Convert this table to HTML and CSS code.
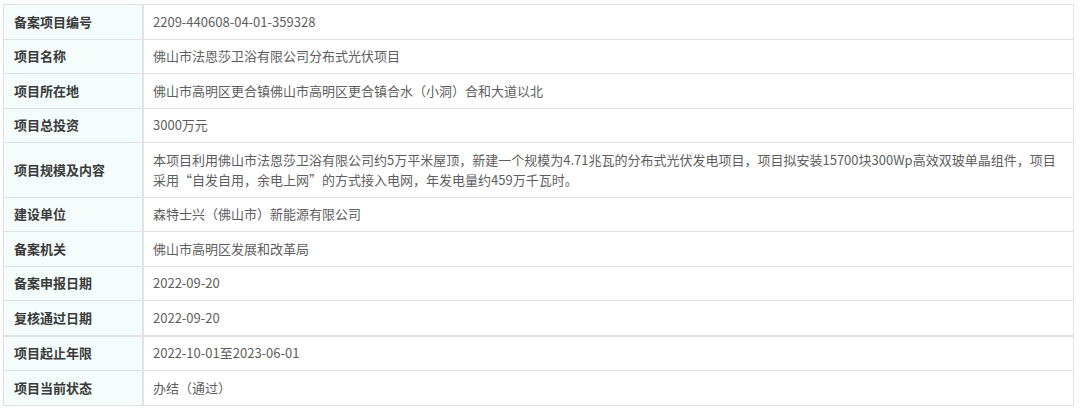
FILE: index.html
```html
<!DOCTYPE html>
<html lang="zh-CN">
  <head>
    <meta charset="utf-8">
    <title>备案项目信息</title>
    <link rel="stylesheet" href="styles.css">
  </head>
  <body>
    <div class="wrap">
      <table class="info-table">
        <tr><th>备案项目编号</th><td>2209-440608-04-01-359328</td></tr>
        <tr><th>项目名称</th><td>佛山市法恩莎卫浴有限公司分布式光伏项目</td></tr>
        <tr><th>项目所在地</th><td>佛山市高明区更合镇佛山市高明区更合镇合水（小洞）合和大道以北</td></tr>
        <tr><th>项目总投资</th><td>3000万元</td></tr>
        <tr><th>项目规模及内容</th><td>本项目利用佛山市法恩莎卫浴有限公司约5万平米屋顶，新建一个规模为4.71兆瓦的分布式光伏发电项目，项目拟安装15700块300Wp高效双玻单晶组件，项目采用“自发自用，余电上网”的方式接入电网，年发电量约459万千瓦时。</td></tr>
        <tr><th>建设单位</th><td>森特士兴（佛山市）新能源有限公司</td></tr>
        <tr><th>备案机关</th><td>佛山市高明区发展和改革局</td></tr>
        <tr><th>备案申报日期</th><td>2022-09-20</td></tr>
        <tr class="split"><th>复核通过日期</th><td>2022-09-20</td></tr>
        <tr><th>项目起止年限</th><td>2022-10-01至2023-06-01</td></tr>
        <tr><th>项目当前状态</th><td>办结（通过）</td></tr>
      </table>
    </div>
  </body>
</html>
```

FILE: styles.css
```css
/* 页面基础 */
body {
    margin: 0;
    background-color: #ffffff;
    font-family: "Microsoft YaHei", "Noto Sans CJK SC", sans-serif;
}

.wrap {
    padding: 4px 6px 0 3px;
}

/* 信息表格 */
.info-table {
    width: 1071px;
    border-collapse: collapse;
    table-layout: fixed;
    font-size: 13px;
    line-height: 20px;
}

.info-table th,
.info-table td {
    border: 1px solid #e2e2e2;
    padding: 6.75px 10px 6.75px 10px;
    text-align: left;
    vertical-align: middle;
}

.info-table th {
    width: 118px;
    background-color: #f4fcfc;
    color: #3a3a3a;
    font-weight: bold;
    border-right-width: 2px;
}

.info-table td {
    color: #5e5e5e;
    padding-left: 9px;
}

.info-table .split th,
.info-table .split td {
    border-bottom-width: 2px;
}
```
